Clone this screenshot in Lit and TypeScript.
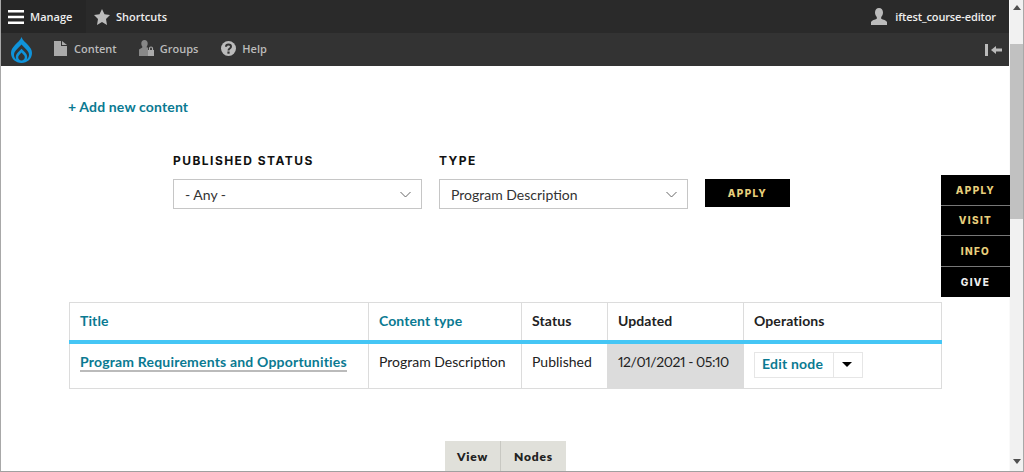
import { LitElement, html, css } from "lit";
import { customElement } from "lit/decorators.js";

@customElement("app-root")
export class AppRoot extends LitElement {
  static styles = css`
    :host { display: block; width: 1024px; height: 472px; overflow: hidden; font-family: "Lato", "Liberation Sans", sans-serif; background: #fff; }
    * { box-sizing: border-box; }
    .frame { position: relative; display: flex; height: 472px; border-left: 1px solid #a8a8a8; border-right: 1px solid #a8a8a8; border-bottom: 1px solid #a0a0a0; }
    .page { flex: 1; min-width: 0; display: flex; flex-direction: column; }
    .bar1 { height: 33px; background: #2a2a2a; display: flex; align-items: stretch; font-family: "Open Sans", sans-serif; font-size: 11px; font-weight: 600; color: #eee; }
    .tab { display: flex; align-items: center; }
    .manage { width: 85px; background: #262626; padding-left: 7px; gap: 6px; }
    .shortcuts { padding-left: 8px; gap: 6px; }
    .user { margin-left: auto; padding-right: 13px; gap: 8px; letter-spacing: -0.13px; }
    .bar2 { height: 33px; background: #333; display: flex; align-items: center; font-family: "Open Sans", sans-serif; font-size: 11px; font-weight: 600; color: #bbb; padding-left: 10px; }
    .bar2 .logo { margin-right: 22px; }
    .item { display: flex; align-items: center; gap: 6px; margin-right: 23px; padding-bottom: 3px; }
    .item.first { gap: 7px; margin-right: 22px; }
    .collapse { margin-left: auto; margin-right: 7px; }
    .content { flex: 1; padding: 32px 0 0 68px; min-height: 0; }
    .add { color: #0a7a92; font-weight: 700; font-size: 14px; line-height: 17px; letter-spacing: 0.15px; margin-left: -1px; }
    .filters { display: flex; align-items: flex-end; margin: 39px 0 0 104px; }
    .field { margin-right: 17px; }
    .label { font-family: "Inter", sans-serif; font-size: 12px; font-weight: 700; letter-spacing: 1.45px; line-height: 14px; color: #111; margin-bottom: 11px; }
    .select { width: 249px; height: 30px; border: 1px solid #c6c6c6; display: flex; align-items: center; justify-content: space-between; padding: 0 10px 0 11px; font-size: 14px; color: #333; }
    .apply { width: 85px; height: 28px; margin: 0 0 2px 0; background: #000; color: #e8cf7c; font-family: "Inter", sans-serif; font-size: 10px; font-weight: 800; letter-spacing: 1.3px; display: flex; align-items: center; justify-content: center; }
    table { border-collapse: collapse; margin-top: 93px; width: 872px; table-layout: fixed; font-size: 14px; color: #222; }
    th, td { border: 1px solid #dcdcdc; padding: 0 10px; text-align: left; white-space: nowrap; }
    th { height: 39px; font-weight: 700; color: #222; border-bottom: 4px solid #45c6f5; padding-bottom: 2px; letter-spacing: 0.1px; }
    th.link { color: #0a7a92; }
    td { height: 47px; vertical-align: top; padding-top: 9px; line-height: 17px; }
    td.title a { color: #0a7a92; font-weight: 700; letter-spacing: 0.19px; border-bottom: 2px solid #bbb; }
    td.updated { background: #dcdcdc; font-variant-numeric: proportional-nums; letter-spacing: -0.45px; }
    .ops { display: inline-flex; height: 26px; margin-top: -1px; border: 1px solid #e6e6e6; align-items: stretch; }
    .ops .edit { color: #0a7a92; font-weight: 700; letter-spacing: 0.2px; padding: 0 0 2px 7px; display: flex; align-items: center; width: 79px; border-right: 1px solid #e6e6e6; }
    .ops .arrow { width: 28px; display: flex; align-items: center; justify-content: center; padding-right: 3px; }
    .tabs { display: flex; margin: 52px 0 0 376px; }
    .tabs div { height: 30px; background: #e0e0da; font-size: 12px; font-weight: 800; letter-spacing: 0.8px; color: #222; display: flex; align-items: center; justify-content: center; }
    .tabs .v { width: 56px; border-right: 1px solid #c8c8c2; }
    .tabs .n { width: 65px; }
    .side { position: absolute; left: 940px; top: 175px; width: 69px; background: #000; font-family: "Inter", sans-serif; font-size: 10px; font-weight: 800; letter-spacing: 1.3px; color: #e8cf7c; }
    .side div { height: 30.5px; display: flex; align-items: center; justify-content: center; border-bottom: 1px solid #777; }
    .side div:last-child { border-bottom: 0; color: #eee; }
    .scroll { width: 14px; background: #f1f1f1; display: flex; flex-direction: column; align-items: center; border-left: 1px solid #fafafa; }
    .scroll .up { height: 44px; padding-top: 5px; }
    .scroll .thumb { width: 100%; height: 175px; background: #c1c1c1; }
    .scroll .down { margin-top: auto; height: 12px; }
    .scroll svg { display: block; }
  `;

  render() {
    const chevron = html`<svg width="11" height="7" viewBox="0 0 11 7"><path fill="none" stroke="#666" d="M.5 1l5 5 5-5"/></svg>`;
    return html`<div class="frame">
      <div class="page">
        <div class="bar1">
          <div class="tab manage">
            <svg width="16" height="16" viewBox="0 0 16 16"><path fill="#fff" d="M0 1h16v2.600H0zM0 6.700h16v2.600H0zM0 12.400h16V15H0z"/></svg>
            <span>Manage</span>
          </div>
          <div class="tab shortcuts">
            <svg width="16" height="16" viewBox="0 0 16 16"><path fill="#bbb" d="M8 0l2.500 5.300 5.500.7-4 4 1 6-5-2.900L3 16l1-6-4-4 5.500-.7z"/></svg>
            <span>Shortcuts</span>
          </div>
          <div class="tab user">
            <svg width="16" height="18" viewBox="0 0 16 18"><path fill="#bbb" d="M8 0c2.500 0 4 2 4 4.600 0 2-1 3.700-1.800 4.500v1.600c1.800.8 5.300 1.700 5.800 3.300V17H0v-3c.5-1.600 4-2.500 5.800-3.300V9.100C5 8.300 4 6.600 4 4.600 4 2 5.500 0 8 0z"/></svg>
            <span>iftest_course-editor</span>
          </div>
        </div>
        <div class="bar2">
          <svg class="logo" width="21" height="26" viewBox="0 0 21 26">
            <path fill="#0f93da" d="M10.500 0c1 3.600 4 5.200 6.500 8 2.400 2.600 4 5 4 8 0 5.700-4.700 10-10.500 10S0 21.700 0 16c0-3 1.600-5.400 4-8 2.500-2.800 5.500-4.400 6.500-8z"/>
            <path fill="#333" d="M10.500 7.500l5.500 5.700c1.400 1.500 2 3 2 4.600 0 1.900-.9 3.600-2.300 4.800 .3-.8.500-1.600.5-2.500 0-1.900-.9-3.400-2-4.600l-3.700-3.700-3.700 3.700c-1.100 1.200-2 2.700-2 4.600 0 .9.200 1.700.5 2.500C3.900 21.400 3 19.700 3 17.800c0-1.600.6-3.100 2-4.600z"/>
            <path fill="#333" d="M10.500 15.500l2.300 2.400c.8.800 1 1.600 1 2.400 0 1.900-1.500 3.200-3.300 3.200s-3.300-1.300-3.300-3.200c0-.8.200-1.600 1-2.400z"/>
          </svg>
          <div class="item first">
            <svg width="13" height="15" viewBox="0 0 13 15"><path fill="#aaa" d="M0 0h7v5h6v10H0zM8 0l5 4H8z"/></svg>
            <span>Content</span>
          </div>
          <div class="item">
            <svg width="15" height="16" viewBox="0 0 15 16"><path fill="#888" d="M5.500 0c2 0 3.200 1.500 3.200 3.500 0 1.300-.5 2.200-1 3v1H9V16H0V9.500l3.300-2v-1c-.5-.8-1-1.700-1-3C2.300 1.500 3.500 0 5.500 0z"/><path fill="#aaa" d="M9 10h6v6H9z"/><path fill="none" stroke="#aaa" stroke-width="1.200" d="M10.500 10V8.500a1.500 1.500 0 0 1 3 0V10"/></svg>
            <span>Groups</span>
          </div>
          <div class="item">
            <svg width="15" height="15" viewBox="0 0 15 15"><circle cx="7.500" cy="7.500" r="7.500" fill="#bbb"/><path fill="none" stroke="#333" stroke-width="2" d="M5 5.800c0-1.400 1.100-2.300 2.500-2.300s2.500.9 2.500 2.200c0 1.800-2.500 1.800-2.500 3.700"/><rect x="6.400" y="10.500" width="2.200" height="2.200" fill="#333"/></svg>
            <span>Help</span>
          </div>
          <svg class="collapse" width="17" height="12" viewBox="0 0 17 12"><rect x="0" y="0" width="3" height="12" fill="#bbb"/><path fill="#bbb" d="M6 6l5-4v2.500h6v3h-6V10z"/></svg>
        </div>
        <div class="content">
          <div class="add">+ Add new content</div>
          <div class="filters">
            <div class="field">
              <div class="label">PUBLISHED STATUS</div>
              <div class="select"><span>- Any -</span>${chevron}</div>
            </div>
            <div class="field">
              <div class="label">TYPE</div>
              <div class="select"><span>Program Description</span>${chevron}</div>
            </div>
            <div class="apply">APPLY</div>
          </div>
          <table>
            <colgroup><col style="width:299px"/><col style="width:153px"/><col style="width:86px"/><col style="width:136px"/><col style="width:198px"/></colgroup>
            <thead><tr><th class="link">Title</th><th class="link">Content type</th><th>Status</th><th>Updated</th><th>Operations</th></tr></thead>
            <tbody><tr>
              <td class="title"><a>Program Requirements and Opportunities</a></td>
              <td>Program Description</td>
              <td>Published</td>
              <td class="updated">12/01/2021 - 05:10</td>
              <td><div class="ops"><div class="edit">Edit node</div><div class="arrow"><svg width="10" height="5" viewBox="0 0 10 5"><path d="M0 0h10L5 5z" fill="#000"/></svg></div></div></td>
            </tr></tbody>
          </table>
          <div class="tabs"><div class="v">View</div><div class="n">Nodes</div></div>
        </div>
      </div>
      <div class="scroll">
        <div class="up"><svg width="8" height="5" viewBox="0 0 8 5"><path d="M4 0l4 5H0z" fill="#505050"/></svg></div>
        <div class="thumb"></div>
        <div class="down"><svg width="8" height="5" viewBox="0 0 8 5"><path d="M0 0h8L4 5z" fill="#505050"/></svg></div>
      </div>
      <div class="side"><div>APPLY</div><div>VISIT</div><div>INFO</div><div>GIVE</div></div>
    </div>`;
  }
}
